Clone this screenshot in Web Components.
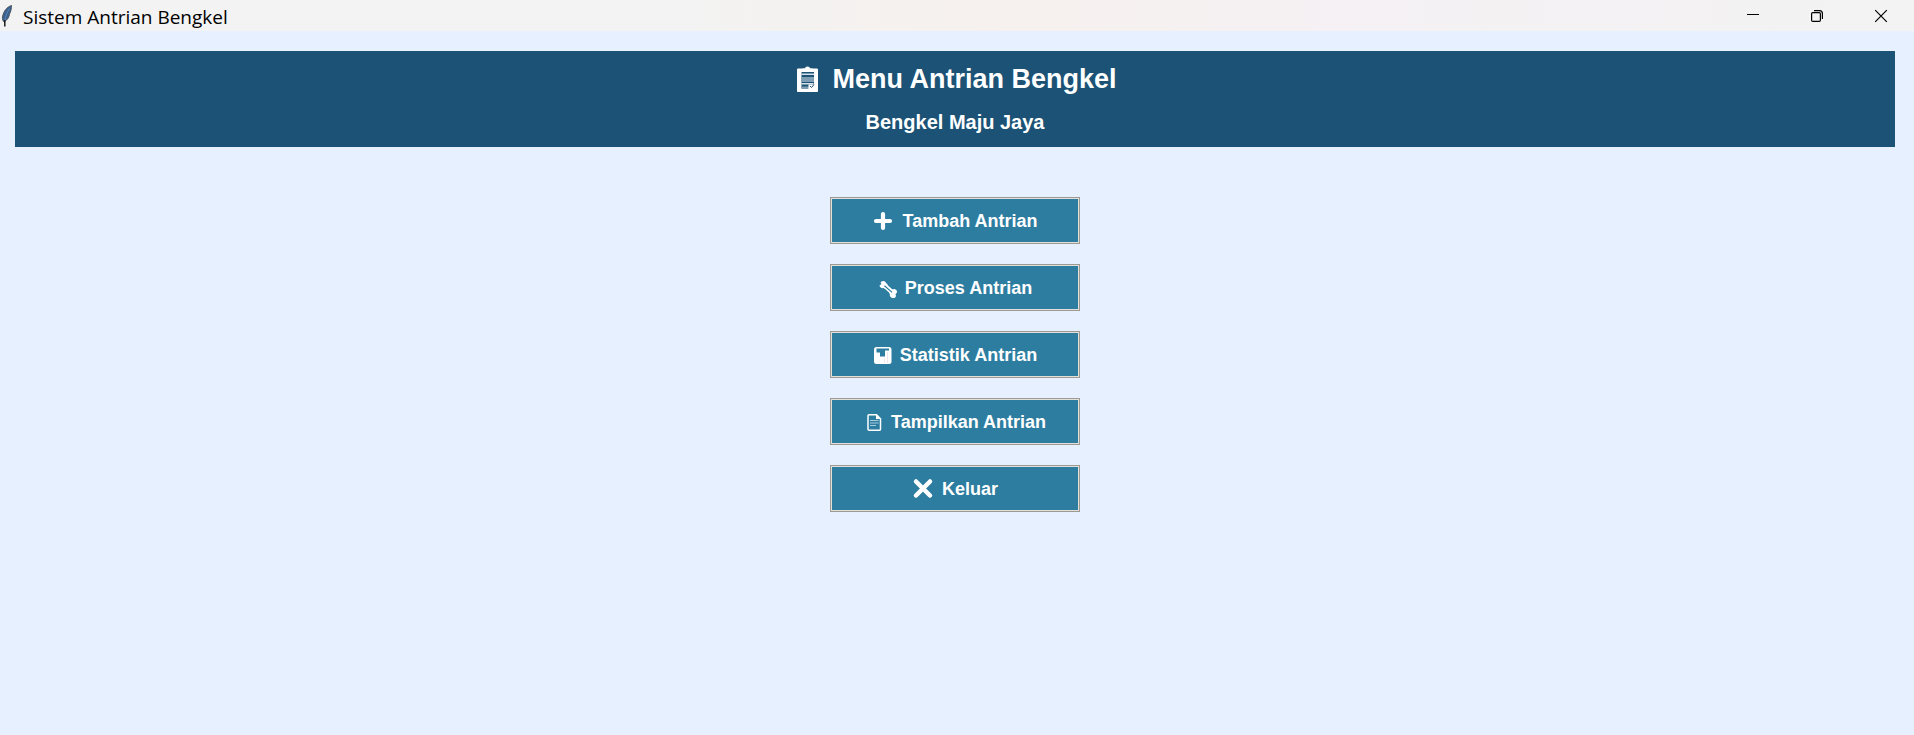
<!DOCTYPE html>
<html lang="id">
<head>
<meta charset="utf-8">
<title>Sistem Antrian Bengkel</title>
<style>
  body { margin: 0; background: #e6f0ff; font-family: "Liberation Sans", Arial, sans-serif; }
</style>
</head>
<body>
<queue-window>
  <title-bar slot="bar">Sistem Antrian Bengkel</title-bar>
  <shop-header>
    Menu Antrian Bengkel
    <span slot="shop">Bengkel Maju Jaya</span>
  </shop-header>
  <menu-list>
    <menu-button icon="plus" wide>Tambah Antrian</menu-button>
    <menu-button icon="wrench">Proses Antrian</menu-button>
    <menu-button icon="chart">Statistik Antrian</menu-button>
    <menu-button icon="page">Tampilkan Antrian</menu-button>
    <menu-button icon="cross" wide>Keluar</menu-button>
  </menu-list>
</queue-window>

<script>
function define(name, html) {
  customElements.define(name, class extends HTMLElement {
    constructor() {
      super();
      this.attachShadow({ mode: "open" }).innerHTML =
        typeof html === "function" ? html(this) : html;
    }
  });
}

define("queue-window", `
  <style>
    :host { display: flex; flex-direction: column; min-height: 100vh; }
    main { flex: 1; padding: 20px 19px 20px 15px; }
  </style>
  <slot name="bar"></slot>
  <main><slot></slot></main>`);

define("title-bar", `
  <style>
    :host {
      display: flex; align-items: center; height: 31px; color: #000;
      background: linear-gradient(90deg, #f3f3f3 0%, #f3f3f3 35%, #f6f1ee 52%, #f5f1f4 70%, #f3f3f3 100%);
      font: 19px/31px "Open Sans", "Noto Sans", sans-serif;
    }
    .feather { flex: none; width: 14px; height: 28px; margin-right: 9px; }
    .name { flex: 1; padding-top: 3px; }
    .controls { display: flex; padding-right: 1px; }
    button { display: grid; place-items: center; width: 64px; height: 31px; padding: 0; border: 0; background: none; color: #000; }
    button svg { width: 14px; height: 14px; fill: none; stroke: currentColor; }
  </style>
  <svg class="feather" viewBox="0 0 14 28" aria-hidden="true">
    <path d="M11.5 3.5C7 5 3.500 9 2.500 15c-.3 2 .2 3.500 1.500 5C7 18 9 16 9.500 12c1.500-2.500 2-6 2-8.500z" fill="#3a6291" stroke="#4d5760" stroke-width="1"/>
    <path d="M9.500 6.500C7 10 5.500 14 4.800 19" fill="none" stroke="#5c86b5" stroke-width="1"/>
    <path d="M4.800 18v6.500" stroke="#1c1c1c" stroke-width="1.500"/>
  </svg>
  <span class="name"><slot></slot></span>
  <div class="controls">
    <button type="button" aria-label="Minimize"><svg viewBox="0 0 14 14"><path d="M1 5.500h12"/></svg></button>
    <button type="button" aria-label="Restore"><svg viewBox="0 0 14 14" stroke-width="1.200"><rect x="1.600" y="3.600" width="8.800" height="8.800" rx="1.200"/><path d="M4 1.600h5.500a2.900 2.900 0 0 1 2.900 2.900v5.500"/></svg></button>
    <button type="button" aria-label="Close"><svg viewBox="0 0 14 14" stroke-width="1.200"><path d="M1.200 1.200l11.600 11.600M12.800 1.200L1.200 12.800"/></svg></button>
  </div>`);

define("shop-header", `
  <style>
    :host { display: block; padding: 10px 0 9px; background: #1b5275; color: #fff; text-align: center; }
    h1 { display: flex; justify-content: center; align-items: center; gap: 9px; margin: 0; font-size: 27px; line-height: 36px; }
    svg { width: 30px; height: 30px; }
    h2 { margin: 9px 0 0; font-size: 20px; line-height: 32px; }
  </style>
  <h1>
    <svg viewBox="0 0 30 30" aria-hidden="true">
      <path d="M4.500 5h20v22.500h-20zM8 7.500v17.500h13.500v-17.500z" fill="#fff" fill-rule="evenodd" stroke="#fff" stroke-linejoin="round"/>
      <path d="M9.500 4.500h2.500a2.500 2 0 0 1 5 0h2.500l1 3.500h-12z" fill="#fff"/>
      <path d="M8.500 9.500h12.500v1.500H8.500zM8.500 19h12v1.500h-12z" fill="#d5e0e8"/>
      <path d="M8.500 13h12.500v5H8.500zM8.500 22.500h8v2.500h-8z" fill="#7f9db3"/>
      <path d="M15.500 26v-5.500h7v5z" fill="#fff"/>
      <path d="M17 22l1.500 1.500 2.500-3" fill="none" stroke="#1b5275"/>
    </svg>
    <span><slot></slot></span>
  </h1>
  <h2><slot name="shop"></slot></h2>`);

define("menu-list", `
  <style>
    :host { display: flex; flex-direction: column; align-items: center; gap: 20px; margin-top: 50px; }
  </style>
  <slot></slot>`);

const icons = {
  plus: `<path d="M11 4v14M4 11h14" stroke="#fff" stroke-width="4.200" stroke-linecap="round"/>`,
  wrench: `<path d="M6 8l9 8" stroke="#fff" stroke-width="4.500"/>
    <path d="M1.500 8.500l2-1.500-1-1.500a3 3 0 0 1 5.500.5 2.600 2.600 0 0 1-2.500 5 3 3 0 0 1-4-2.500zM12 17a2.600 2.600 0 0 1 2.500-4.500 3 3 0 0 1 4.500 3l-1.500 1.500.5 2a3 3 0 0 1-6-2z" fill="#fff"/>
    <path d="M6.500 8.800l7.500 6.600" stroke="#2d7da1" stroke-width="1.200"/>`,
  chart: `<rect x="1" y="3" width="17.500" height="17" rx="2.500" fill="#fff"/>
    <path d="M3.500 4.500h12.500v2h-4v6h-5v-4h-3.500z" fill="#2d7da1"/>
    <path d="M11.500 14v5M14.500 8v11" stroke="#f3e6ea"/>`,
  page: `<path d="M5 3.800h7.500l4 4v10.500a1 1 0 0 1-1 1h-10.500a1 1 0 0 1-1-1v-13.500a1 1 0 0 1 1-1z" fill="none" stroke="#fff" stroke-width="1.500"/>
    <path d="M12 3.500v4.500h4.500z" fill="#fff"/>
    <path d="M6 9.500h8.500M6 12h8.500M6 14.500h6" stroke="#a9cbdb"/>`,
  cross: `<path d="M4 3.500l14 14M18 3.500l-14 14" stroke="#fff" stroke-width="4.500" stroke-linecap="round"/>`
};

define("menu-button", host => `
  <style>
    :host { display: block; --gap: 5px; }
    :host([wide]) { --gap: 8px; }
    button {
      display: flex; justify-content: center; align-items: center; gap: var(--gap);
      width: 250px; height: 47px; padding: 0; border: 1px solid #9d9a93;
      background: #2d7da1; color: #fff; box-shadow: inset 0 0 0 1px #e3e0db;
      font: bold 18px/24px "Liberation Sans", Arial, sans-serif;
    }
    svg { flex: none; width: 22px; height: 21px; }
  </style>
  <button type="button">
    <svg viewBox="0 0 22 21" fill="none" aria-hidden="true">${icons[host.getAttribute("icon")]}</svg>
    <span><slot></slot></span>
  </button>`);
</script>
</body>
</html>
